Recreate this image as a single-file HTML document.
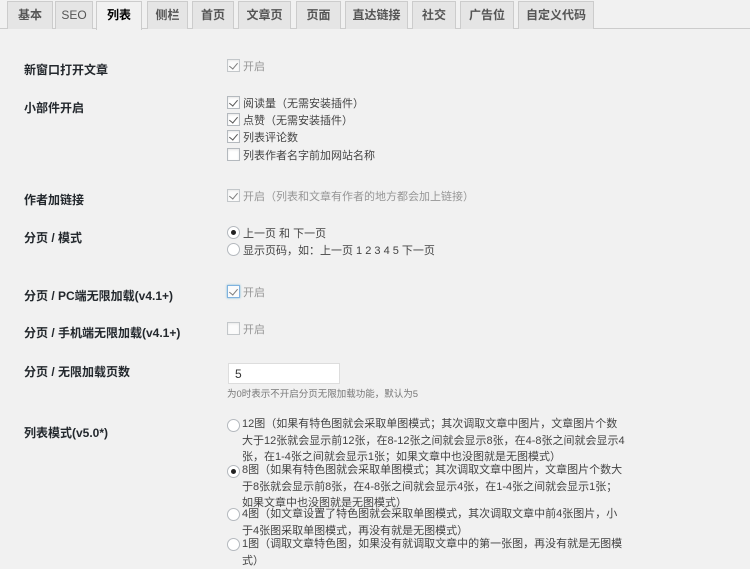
<!DOCTYPE html>
<html><head><meta charset="utf-8"><style>
*{margin:0;padding:0;box-sizing:border-box}
body{width:750px;height:566px;overflow:hidden;background:#f1f1f1;font-family:"Liberation Sans","Noto Sans CJK SC",sans-serif;color:#444;position:relative}
.tabs{position:absolute;left:0;top:0;width:750px;height:29px;border-bottom:1px solid #ccc}
.tab{position:absolute;top:1px;height:28px;background:#e5e5e5;border:1px solid #ccc;border-bottom:none;font-size:12px;font-weight:bold;color:#555;text-align:center;line-height:26px}
.tab.act{background:#f1f1f1;color:#000;height:29px}
.lbl{position:absolute;left:24px;font-size:12px;font-weight:bold;color:#23282d}
.opt{position:absolute;left:227px;font-size:11px;color:#444;line-height:17px}
.cb{display:inline-block;width:13px;height:13px;border:1px solid #b4b9be;background:#fff;vertical-align:-2px;margin-right:3px;position:relative;box-shadow:inset 0 1px 2px rgba(0,0,0,.1)}
.cb.on::after{content:"";position:absolute;left:3px;top:1px;width:4px;height:7px;border:solid #555;border-width:0 1.3px 1.3px 0;transform:rotate(40deg)}
.dis{opacity:.75;color:#777}
.rd{display:inline-block;width:13px;height:13px;border:1px solid #b4b9be;border-radius:50%;background:#fff;vertical-align:-2px;margin-right:3px;position:relative}
.rd.on::after{content:"";position:absolute;left:3px;top:3px;width:5px;height:5px;border-radius:50%;background:#222}
.para{position:absolute;left:242px;font-size:11px;line-height:16.5px;color:#444;white-space:nowrap}
</style></head><body>
<div class="tabs">
<div class="tab" style="left:7px;width:46px">基本</div>
<div class="tab" style="left:55px;width:38px;font-weight:normal">SEO</div>
<div class="tab act" style="left:96px;width:46px">列表</div>
<div class="tab" style="left:147px;width:41px">侧栏</div>
<div class="tab" style="left:192px;width:42px">首页</div>
<div class="tab" style="left:238px;width:53px">文章页</div>
<div class="tab" style="left:296px;width:45px">页面</div>
<div class="tab" style="left:345px;width:63px">直达链接</div>
<div class="tab" style="left:412px;width:44px">社交</div>
<div class="tab" style="left:460px;width:54px">广告位</div>
<div class="tab" style="left:518px;width:76px">自定义代码</div>
</div>

<div class="lbl" style="top:61px">新窗口打开文章</div>
<div class="opt dis" style="top:59px"><span class="cb on"></span>开启</div>

<div class="lbl" style="top:99px">小部件开启</div>
<div class="opt" style="top:96px"><span class="cb on"></span>阅读量（无需安装插件）</div>
<div class="opt" style="top:113px"><span class="cb on"></span>点赞（无需安装插件）</div>
<div class="opt" style="top:130px"><span class="cb on"></span>列表评论数</div>
<div class="opt" style="top:148px"><span class="cb"></span>列表作者名字前加网站名称</div>

<div class="lbl" style="top:191px">作者加链接</div>
<div class="opt dis" style="top:189px"><span class="cb on"></span>开启（列表和文章有作者的地方都会加上链接）</div>

<div class="lbl" style="top:229px">分页 / 模式</div>
<div class="opt" style="top:226px"><span class="rd on"></span>上一页 和 下一页</div>
<div class="opt" style="top:243px"><span class="rd"></span>显示页码，如：上一页 1 2 3 4 5 下一页</div>

<div class="lbl" style="top:287px">分页 / PC端无限加载(v4.1+)</div>
<div class="opt dis" style="top:285px"><span class="cb on" style="border-color:#5b9dd9;box-shadow:0 0 2px rgba(30,140,190,.8)"></span>开启</div>

<div class="lbl" style="top:324px">分页 / 手机端无限加载(v4.1+)</div>
<div class="opt dis" style="top:322px"><span class="cb"></span>开启</div>

<div class="lbl" style="top:363px">分页 / 无限加载页数</div>
<div style="position:absolute;left:228px;top:363px;width:112px;height:21px;background:#fff;border:1px solid #ddd;font-size:12px;padding:3px 0 0 6px;color:#333">5</div>
<div style="position:absolute;left:227px;top:386px;font-size:9.5px;color:#777">为0时表示不开启分页无限加载功能，默认为5</div>

<div class="lbl" style="top:424px">列表模式(v5.0*)</div>
<span class="rd" style="position:absolute;left:227px;top:419px"></span>
<div class="para" style="top:416px">12图（如果有特色图就会采取单图模式；其次调取文章中图片，文章图片个数<br>大于12张就会显示前12张，在8-12张之间就会显示8张，在4-8张之间就会显示4<br>张，在1-4张之间就会显示1张；如果文章中也没图就是无图模式）</div>
<span class="rd on" style="position:absolute;left:227px;top:465px"></span>
<div class="para" style="top:462px">8图（如果有特色图就会采取单图模式；其次调取文章中图片，文章图片个数大<br>于8张就会显示前8张，在4-8张之间就会显示4张，在1-4张之间就会显示1张；<br>如果文章中也没图就是无图模式）</div>
<span class="rd" style="position:absolute;left:227px;top:508px"></span>
<div class="para" style="top:506px">4图（如文章设置了特色图就会采取单图模式，其次调取文章中前4张图片，小<br>于4张图采取单图模式，再没有就是无图模式）</div>
<span class="rd" style="position:absolute;left:227px;top:538px"></span>
<div class="para" style="top:536px">1图（调取文章特色图，如果没有就调取文章中的第一张图，再没有就是无图模<br>式）</div>
</body></html>
